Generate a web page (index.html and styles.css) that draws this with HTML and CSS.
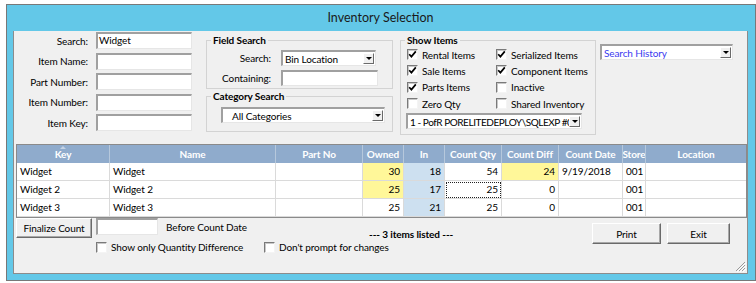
FILE: index.html
```html
<!DOCTYPE html>
<html lang="en">
<head>
    <meta charset="UTF-8">
    <title>Inventory Selection</title>
    <link rel="stylesheet" href="styles.css">
</head>
<body>
    <div class="window">
        <div class="titlebar">Inventory Selection</div>
        <div class="client">
            <div class="filters">
                <div class="key-fields">
                    <label>Search:</label><div class="textbox">Widget</div>
                    <label>Item Name:</label><div class="textbox"></div>
                    <label>Part Number:</label><div class="textbox"></div>
                    <label>Item Number:</label><div class="textbox"></div>
                    <label>Item Key:</label><div class="textbox"></div>
                </div>

                <div class="groups">
                    <fieldset class="group field-search">
                        <legend>Field Search</legend>
                        <div class="field-grid">
                            <label>Search:</label>
                            <div class="combo bin-combo"><span class="combo-text">Bin Location</span><span class="drop"></span></div>
                            <label>Containing:</label>
                            <div class="textbox containing"></div>
                        </div>
                    </fieldset>
                    <fieldset class="group category-search">
                        <legend>Category Search</legend>
                        <div class="combo category-combo"><span class="combo-text">All Categories</span><span class="drop"></span></div>
                    </fieldset>
                </div>

                <fieldset class="group show-items">
                    <legend>Show Items</legend>
                    <div class="check-grid">
                        <div class="check"><span class="box"><svg width="9" height="9" viewBox="0 0 9 9"><path d="M1.2 4.2 L3.4 6.6 L7.8 1.4" fill="none" stroke="#000" stroke-width="1.7"/></svg></span>Rental Items</div>
                        <div class="check"><span class="box"><svg width="9" height="9" viewBox="0 0 9 9"><path d="M1.2 4.2 L3.4 6.6 L7.8 1.4" fill="none" stroke="#000" stroke-width="1.7"/></svg></span>Serialized Items</div>
                        <div class="check"><span class="box"><svg width="9" height="9" viewBox="0 0 9 9"><path d="M1.2 4.2 L3.4 6.6 L7.8 1.4" fill="none" stroke="#000" stroke-width="1.7"/></svg></span>Sale Items</div>
                        <div class="check"><span class="box"><svg width="9" height="9" viewBox="0 0 9 9"><path d="M1.2 4.2 L3.4 6.6 L7.8 1.4" fill="none" stroke="#000" stroke-width="1.7"/></svg></span>Component Items</div>
                        <div class="check"><span class="box"><svg width="9" height="9" viewBox="0 0 9 9"><path d="M1.2 4.2 L3.4 6.6 L7.8 1.4" fill="none" stroke="#000" stroke-width="1.7"/></svg></span>Parts Items</div>
                        <div class="check"><span class="box"></span>Inactive</div>
                        <div class="check"><span class="box"></span>Zero Qty</div>
                        <div class="check"><span class="box"></span>Shared Inventory</div>
                    </div>
                    <div class="combo db-combo"><span class="combo-text">1 - PofR PORELITEDEPLOY\SQLEXP #0</span><span class="drop"></span></div>
                </fieldset>

                <div class="combo history-combo"><span class="combo-text">Search History</span><span class="drop"></span></div>
            </div>

            <table class="items">
                <colgroup>
                    <col style="width: 93px">
                    <col style="width: 166px">
                    <col style="width: 87px">
                    <col style="width: 41px">
                    <col style="width: 41px">
                    <col style="width: 57px">
                    <col style="width: 57px">
                    <col style="width: 64px">
                    <col style="width: 23px">
                    <col style="width: 100px">
                </colgroup>
                <thead>
                    <tr>
                        <th class="sorted"><span class="sort-arrow"></span>Key</th>
                        <th>Name</th>
                        <th>Part No</th>
                        <th>Owned</th>
                        <th>In</th>
                        <th>Count Qty</th>
                        <th>Count Diff</th>
                        <th>Count Date</th>
                        <th class="narrow"><span>Store</span></th>
                        <th>Location</th>
                    </tr>
                </thead>
                <tbody>
                    <tr>
                        <td>Widget</td>
                        <td>Widget</td>
                        <td></td>
                        <td class="num warn">30</td>
                        <td class="num in">18</td>
                        <td class="num">54</td>
                        <td class="num warn">24</td>
                        <td>9/19/2018</td>
                        <td class="store">001</td>
                        <td></td>
                    </tr>
                    <tr>
                        <td>Widget 2</td>
                        <td>Widget 2</td>
                        <td></td>
                        <td class="num warn">25</td>
                        <td class="num in">17</td>
                        <td class="num focused">25</td>
                        <td class="num">0</td>
                        <td></td>
                        <td class="store">001</td>
                        <td></td>
                    </tr>
                    <tr>
                        <td>Widget 3</td>
                        <td>Widget 3</td>
                        <td></td>
                        <td class="num">25</td>
                        <td class="num in">21</td>
                        <td class="num">25</td>
                        <td class="num">0</td>
                        <td></td>
                        <td class="store">001</td>
                        <td></td>
                    </tr>
                </tbody>
            </table>

            <div class="footer">
                <div class="footer-left">
                    <div class="finalize-row">
                        <button class="btn finalize">Finalize Count</button>
                        <div class="textbox count-date"></div>
                        <span class="before-label">Before Count Date</span>
                    </div>
                    <div class="option-row">
                        <div class="check qty-diff"><span class="box"></span>Show only Quantity Difference</div>
                        <div class="check"><span class="box"></span>Don't prompt for changes</div>
                    </div>
                </div>
                <div class="status">--- 3 items listed ---</div>
                <div class="actions">
                    <button class="btn print">Print</button>
                    <button class="btn exit">Exit</button>
                </div>
            </div>

            <svg class="grip" width="12" height="12" viewBox="0 0 12 12">
                <path d="M11 2 L2 11 M11 5 L5 11 M11 8 L8 11" stroke="#9a9a9a" stroke-width="1"/>
                <path d="M12 3 L3 12 M12 6 L6 12 M12 9 L9 12" stroke="#ffffff" stroke-width="1"/>
            </svg>
        </div>
    </div>
</body>
</html>
```

FILE: styles.css
```css
body {
    margin: 0;
    background-color: #fff;
    font-family: Lato, "Liberation Sans", sans-serif;
    font-size: 10px;
    letter-spacing: -0.1px;
    color: #000;
}
.window {
    width: 750px;
    box-sizing: border-box;
    margin: 4px 0 0 6px;
    padding: 0 7px 6px 6px;
    border: 1px solid #787878;
    background-color: #63c8e8;
}
.titlebar {
    height: 26px;
    line-height: 26px;
    text-align: center;
    font-size: 12.5px;
    letter-spacing: 0;
    color: #1a1a1a;
}
.client {
    position: relative;
    height: 242px;
    background-color: #f0f0f0;
    border: 1px solid #8c8c8c;
    border-top: none;
}

/* top filter area */
.filters {
    display: flex;
    align-items: flex-start;
    height: 113px;
}
.key-fields {
    display: grid;
    grid-template-columns: 74px 96px;
    grid-auto-rows: 17px;
    column-gap: 8px;
    row-gap: 3.5px;
    align-items: center;
    margin-top: 1px;
}
.key-fields label {
    text-align: right;
}
.textbox {
    box-sizing: border-box;
    height: 100%;
    padding-left: 1px;
    background-color: #fff;
    border-style: solid;
    border-width: 2px 1px 1px 2px;
    border-color: #a0a0a0 #e6e6e6 #e6e6e6 #a0a0a0;
    line-height: 13px;
}
.groups {
    width: 187px;
    margin-left: 14px;
    margin-top: 2.5px;
}
.group {
    margin: 0;
    padding: 0;
    min-width: 0;
    border: 1px solid #d3d3d3;
}
.group legend {
    margin-left: 4px;
    padding: 0 2px;
    font-weight: bold;
    line-height: 13px;
}
.field-search {
    padding-bottom: 2px;
}
.field-grid {
    display: grid;
    grid-template-columns: 64px auto;
    grid-auto-rows: 16px;
    column-gap: 10px;
    row-gap: 4px;
    align-items: center;
    margin-top: 3.5px;
}
.field-grid label {
    text-align: right;
}
.bin-combo {
    width: 95px;
}
.containing {
    width: 97px;
}
.category-search {
    margin-top: 1px;
    padding-bottom: 8px;
}
.category-combo {
    width: 164px;
    height: 16px;
    margin: 4px 0 0 14px;
}
.category-combo .combo-text {
    padding-left: 9px;
}
.show-items {
    width: 196px;
    box-sizing: border-box;
    margin-left: 7px;
    margin-top: 2.5px;
    padding-bottom: 4.5px;
}
.check-grid {
    display: grid;
    grid-template-columns: 89px auto;
    grid-auto-rows: 16.33px;
    align-items: center;
    padding-left: 6px;
}
.check {
    display: flex;
    align-items: center;
    flex: none;
    gap: 4px;
    white-space: nowrap;
}
.box {
    display: flex;
    align-items: center;
    justify-content: center;
    flex: none;
    width: 11px;
    height: 11px;
    box-sizing: border-box;
    background-color: #fff;
    border: 1px solid;
    border-color: #7a7a7a #f4f4f4 #f4f4f4 #7a7a7a;
    box-shadow: inset 1px 1px #c8c8c8;
}
.db-combo {
    width: 176px;
    height: 15px;
    margin: 1.5px 0 0 5px;
    letter-spacing: -0.45px;
}
.history-combo {
    width: 133px;
    height: 17px;
    margin: 13px 0 0 4px;
    color: #3b3bf0;
}

/* combo boxes */
.combo {
    display: flex;
    align-items: center;
    box-sizing: border-box;
    height: 16px;
    background-color: #fff;
    border-style: solid;
    border-width: 2px 1px 1px 2px;
    border-color: #a0a0a0 #e6e6e6 #e6e6e6 #a0a0a0;
}
.combo-text {
    flex: 1;
    overflow: hidden;
    white-space: nowrap;
    padding-left: 2px;
}
.drop {
    display: flex;
    align-items: center;
    justify-content: center;
    flex: none;
    width: 11px;
    height: 11px;
    box-sizing: border-box;
    margin-right: 1px;
    background-color: #f0f0f0;
    border: 1px solid;
    border-color: #fff #6a6a6a #6a6a6a #fff;
}
.drop::after {
    content: "";
    border-left: 3px solid transparent;
    border-right: 3px solid transparent;
    border-top: 3px solid #000;
}

/* grid */
.items {
    width: 731px;
    margin-left: 2px;
    table-layout: fixed;
    border-collapse: separate;
    border-spacing: 0;
    border: 1px solid #8a8a8a;
}
.items th, .items td {
    padding: 0 3px;
    white-space: nowrap;
    overflow: hidden;
    line-height: 17px;
}
.items th {
    height: 18px;
    background-color: #8fabcc;
    color: #fff;
    font-weight: bold;
    text-align: center;
    border-right: 1px solid #b6c8dc;
}
.items td {
    height: 17px;
    background-color: #fff;
    border-right: 1px solid #dadada;
    border-bottom: 1px solid #dadada;
}
.items th:last-child, .items td:last-child {
    border-right: none;
}
.items th.sorted {
    position: relative;
}
.sort-arrow {
    position: absolute;
    top: 1px;
    left: 50%;
    margin-left: -3px;
    border-left: 3px solid transparent;
    border-right: 3px solid transparent;
    border-bottom: 3px solid #c4d2e3;
}
.items th.narrow {
    padding: 0;
}
.items th.narrow span {
    display: block;
    margin: 0 -5px;
}
.items td.num {
    text-align: right;
}
.items td.warn {
    background-color: #fff799;
}
.items td.in {
    background-color: #cde0f0;
}
.items td.store {
    text-align: center;
}
.items td.focused {
    outline: 1px dotted #222;
    outline-offset: -2px;
}

/* bottom area */
.footer {
    display: flex;
    align-items: flex-start;
    margin-left: 2px;
}
.footer-left {
    width: 353px;
}
.finalize-row {
    display: flex;
    align-items: flex-start;
}
.btn {
    box-sizing: border-box;
    padding: 0;
    font-family: inherit;
    font-size: 10px;
    letter-spacing: inherit;
    color: #000;
    background-color: #f0f0f0;
    border: 1px solid;
    border-color: #fff #6a6a6a #6a6a6a #fff;
    box-shadow: inset -1px -1px #a8a8a8;
}
.finalize {
    width: 76px;
    height: 20px;
}
.count-date {
    width: 62px;
    height: 17px;
    margin-left: 4px;
}
.before-label {
    margin-left: 8px;
    line-height: 18px;
}
.option-row {
    display: flex;
    margin-top: 3px;
    padding-left: 80px;
}
.qty-diff {
    width: 168px;
}
.status {
    margin-top: 9.5px;
    font-weight: bold;
    line-height: 13px;
}
.actions {
    display: flex;
    gap: 6px;
    margin: 5px 17px 0 auto;
}
.print {
    width: 69px;
    height: 21px;
}
.exit {
    width: 63px;
    height: 21px;
}
.grip {
    position: absolute;
    right: 1px;
    bottom: 1px;
}
```
